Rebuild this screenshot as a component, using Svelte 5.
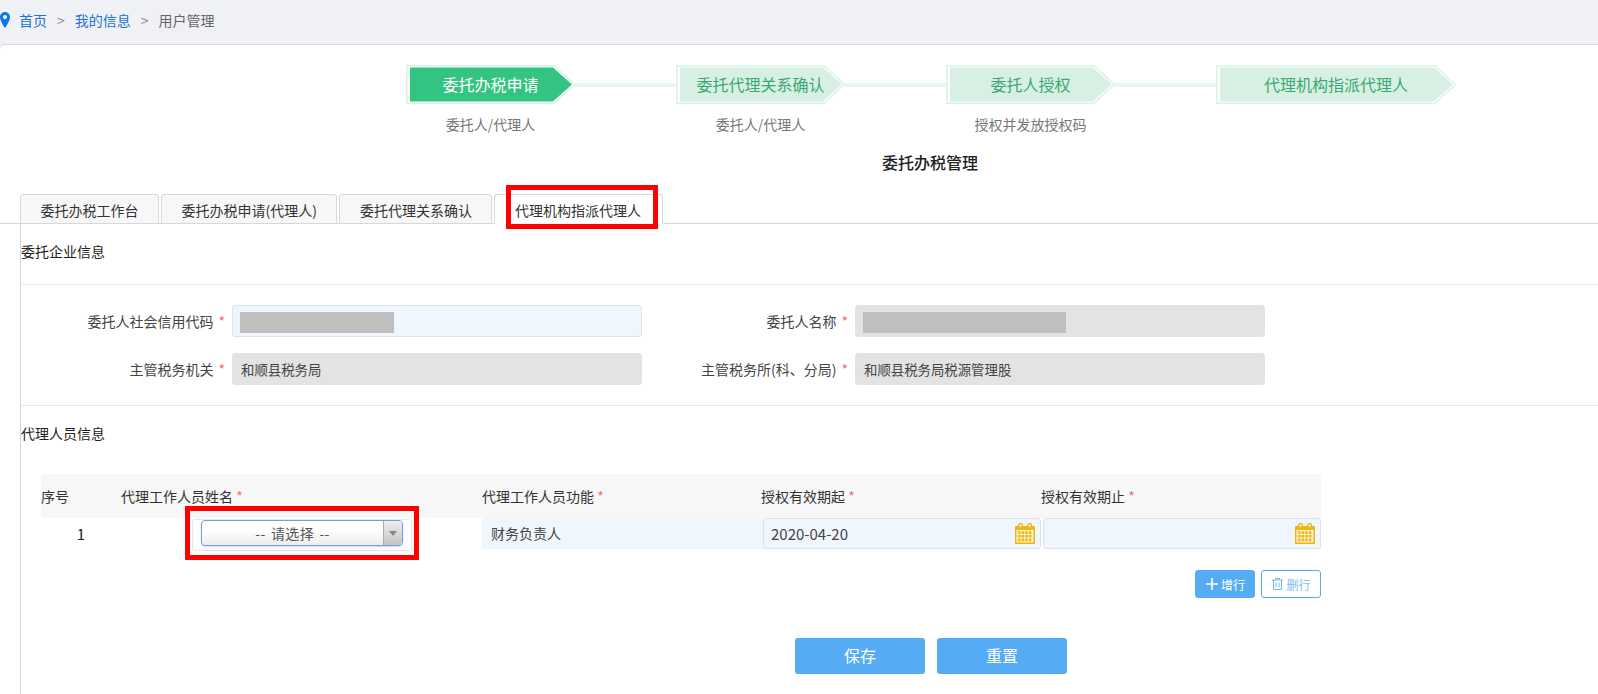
<script>
  const steps = [
    { name: '委托办税申请', sub: '委托人/代理人', w: 169, active: true },
    { name: '委托代理关系确认', sub: '委托人/代理人', w: 169, active: false },
    { name: '委托人授权', sub: '授权并发放授权码', w: 169, active: false },
    { name: '代理机构指派代理人', sub: '', w: 240, active: false }
  ];
  const tabs = ['委托办税工作台', '委托办税申请(代理人)', '委托代理关系确认', '代理机构指派代理人'];
  const cal = [0, 1, 2, 3];
  const calY = [0, 1, 2];
</script>

{#snippet calendar()}
  <svg class="cal" width="20" height="21" viewBox="0 0 20 21">
    <rect x="0" y="3" width="20" height="18" rx="1" fill="#f0b414" />
    <rect x="1.5" y="7" width="17" height="12.5" fill="#fdf3d0" />
    {#each calY as r}
      {#each cal as c}
        <rect x={3 + c * 3.6} y={8.2 + r * 3.7} width="2.6" height="2.7" fill="#f0b414" />
      {/each}
    {/each}
    <circle cx="5.5" cy="2.5" r="2" fill="#fbe7a8" stroke="#f0b414" stroke-width="1.2" />
    <circle cx="14.5" cy="2.5" r="2" fill="#fbe7a8" stroke="#f0b414" stroke-width="1.2" />
  </svg>
{/snippet}

<div class="page">
  <nav class="crumbs">
    <svg class="pin" width="11" height="16" viewBox="0 0 11 16">
      <path d="M5 0C2 0 0 2.300 0 5.200 0 9 5 16 5 16s5-7 5-10.800C10 2.300 8 0 5 0zm0 7.200a2.100 2.100 0 1 1 0-4.200 2.100 2.100 0 0 1 0 4.200z" fill="#0b78e3" />
    </svg>
    <a href="#home">首页</a>
    <span class="sep">&gt;</span>
    <a href="#info">我的信息</a>
    <span class="sep">&gt;</span>
    <span class="cur">用户管理</span>
  </nav>

  <main class="panel">
    <section class="steps">
      {#each steps as s, i}
        {#if i > 0}<div class="link"></div>{/if}
        <div class="col" style="width:{s.w}px">
          <div class="step" class:active={s.active}>
            <svg class="shape" width={s.w} height="39" viewBox="0 0 {s.w} 39">
              <polygon points="0.750,0.750 {s.w - 21},0.750 {s.w - 0.5},19.500 {s.w - 21},38.250 0.750,38.250" fill="#fff" stroke="#d9f2e9" stroke-width="1.500" />
              <polygon points="4,2.500 {s.w - 22},2.500 {s.w - 3},19.500 {s.w - 22},36.500 4,36.500" fill={s.active ? '#33c481' : '#d8f0e3'} />
            </svg>
            <span class="step-name">{s.name}</span>
          </div>
          <p class="sub">{s.sub}</p>
        </div>
      {/each}
    </section>

    <h1 class="title">委托办税管理</h1>

    <div class="tabs">
      {#each tabs as t, i}
        <div class="tab" class:on={i === 3}>
          {t}
          {#if i === 3}<span class="mark mark-tab"></span>{/if}
        </div>
      {/each}
    </div>

    <div class="content">
      <h2 class="head">委托企业信息</h2>
      <div class="form">
        <label class="lbl" for="f1">委托人社会信用代码<i>*</i></label>
        <div class="inp blue" id="f1"><span class="mask m1"></span></div>
        <label class="lbl" for="f2">委托人名称<i>*</i></label>
        <div class="inp gray" id="f2"><span class="mask m2"></span></div>
        <label class="lbl" for="f3">主管税务机关<i>*</i></label>
        <div class="inp gray" id="f3">和顺县税务局</div>
        <label class="lbl" for="f4">主管税务所(科、分局)<i>*</i></label>
        <div class="inp gray" id="f4">和顺县税务局税源管理股</div>
      </div>

      <h2 class="head second">代理人员信息</h2>
      <div class="table">
        <div class="thead">
          <div>序号</div>
          <div>代理工作人员姓名 <i>*</i></div>
          <div>代理工作人员功能 <i>*</i></div>
          <div>授权有效期起 <i>*</i></div>
          <div>授权有效期止 <i>*</i></div>
        </div>
        <div class="trow">
          <div class="no">1</div>
          <div class="namecell">
            <div class="selwrap">
              <div class="select">
                <span class="seltext">-- 请选择 --</span>
                <span class="selarrow"></span>
              </div>
              <span class="mark mark-sel"></span>
            </div>
          </div>
          <div class="fn">财务负责人</div>
          <div class="date">2020-04-20{@render calendar()}</div>
          <div class="date">{@render calendar()}</div>
        </div>
      </div>

      <div class="rowbtns">
        <button class="small fill">
          <svg width="14" height="14" viewBox="0 0 14 14"><path d="M7 1v12M1 7h12" stroke="#fff" stroke-width="1.600" /></svg>
          增行
        </button>
        <button class="small line">
          <svg width="13" height="14" viewBox="0 0 13 14" fill="none" stroke="#72b6f0" stroke-width="1"><path d="M1 3h11M4.500 3V1.500h4V3M2.500 3v9.500h8V3M5 5.500v5M8 5.500v5" /></svg>
          删行
        </button>
      </div>

      <div class="actions">
        <button class="big">保存</button>
        <button class="big">重置</button>
      </div>
    </div>
  </main>
</div>

<style>
  :global(body) {
    margin: 0;
    background: #fff;
  }
  .page {
    width: 1598px;
    height: 694px;
    overflow: hidden;
    background: #eff1f5;
    font-family: "Noto Sans CJK SC", "Open Sans", sans-serif;
    font-size: 14px;
    color: #333;
  }
  .crumbs {
    height: 44px;
    display: flex;
    align-items: center;
    font-size: 14px;
    line-height: 20px;
    padding-bottom: 4px;
    box-sizing: border-box;
  }
  .pin {
    margin-right: 8px;
    flex: none;
  }
  .crumbs a {
    color: #2272d8;
    text-decoration: none;
  }
  .sep {
    color: #888;
    margin: 0 10px;
    font-size: 14px;
  }
  .cur {
    color: #666;
  }
  .panel {
    height: 650px;
    background: #fff;
    border-top: 1px solid #d8d8de;
    border-top-left-radius: 5px;
    box-sizing: border-box;
    padding-top: 20px;
  }
  .steps {
    display: flex;
    align-items: flex-start;
    margin-left: 406px;
    height: 70px;
  }
  .link {
    width: 101px;
    height: 4px;
    margin-top: 18px;
    background: #e8f7f1;
    flex: none;
  }
  .col {
    flex: none;
  }
  .step {
    position: relative;
    height: 39px;
    display: flex;
    align-items: center;
    justify-content: center;
    font-size: 16px;
    color: #3aa874;
  }
  .step.active {
    color: #fff;
  }
  .shape {
    position: absolute;
    left: 0;
    top: 0;
  }
  .step-name {
    position: relative;
    padding-bottom: 2px;
  }
  .sub {
    margin: 10px 0 0;
    line-height: 20px;
    text-align: center;
    font-size: 14px;
    color: #777;
  }
  .title {
    margin: 17px 0 0 0;
    padding-left: 835px;
    width: 190px;
    text-align: center;
    font-size: 16px;
    line-height: 20px;
    font-weight: 500;
    color: #222;
    box-sizing: content-box;
  }
  .tabs {
    display: flex;
    gap: 2px;
    margin-top: 22px;
    padding-left: 20px;
    height: 30px;
    box-sizing: border-box;
    border-bottom: 1px solid #d8d8d8;
  }
  .tab {
    position: relative;
    height: 30px;
    box-sizing: border-box;
    padding: 0 19.500px;
    line-height: 30px;
    background: #f7f7f7;
    border: 1px solid #d8d8d8;
    border-radius: 3px 3px 0 0;
    color: #333;
    white-space: nowrap;
  }
  .tab.on {
    background: #fff;
    border-bottom-color: #fff;
    padding-right: 21px;
  }
  .mark {
    position: absolute;
    border: 5px solid #f00;
    box-sizing: border-box;
    pointer-events: none;
  }
  .mark-tab {
    left: 11px;
    top: -10px;
    width: 152px;
    height: 44px;
  }
  .mark-sel {
    left: -8px;
    top: -14px;
    width: 234px;
    height: 54px;
  }
  .content {
    margin-left: 20px;
    border-left: 1px solid #d5d5db;
    height: 470px;
  }
  .head {
    margin: 0;
    padding: 16px 0 0;
    font-size: 14px;
    line-height: 22px;
    font-weight: 400;
    color: #222;
    border-bottom: 1px solid #e8e8e8;
    height: 61px;
    box-sizing: border-box;
  }
  .head.second {
    border-bottom: 0;
    height: 68px;
  }
  .form {
    display: grid;
    grid-template-columns: 211px 410px 213px 410px;
    grid-auto-rows: 32px;
    row-gap: 16px;
    padding: 20px 0;
    border-bottom: 1px solid #e8e8e8;
  }
  .lbl {
    align-self: center;
    text-align: right;
    padding-right: 7px;
    color: #444;
    white-space: nowrap;
  }
  .lbl i,
  .thead i {
    font-style: normal;
    color: #f36a6a;
  }
  .lbl i {
    margin-left: 5px;
  }
  .inp {
    box-sizing: border-box;
    height: 32px;
    border-radius: 3px;
    border: 1px solid #e3e3e3;
    padding: 0 8px;
    font-size: 13.400px;
    line-height: 31px;
    color: #444;
  }
  .blue {
    background: #f0f6fd;
    border-color: #dde3ec;
  }
  .gray {
    background: #e3e3e3;
  }
  .mask {
    display: block;
    height: 21px;
    margin: 6px 0 0 -1px;
    background: #bfbfbf;
  }
  .m1 {
    width: 154px;
  }
  .m2 {
    width: 203px;
  }
  .table {
    margin-left: 20px;
    width: 1280px;
  }
  .thead {
    display: grid;
    grid-template-columns: 80px 361px 279px 280px 280px;
    height: 44px;
    line-height: 44px;
    background: #f7f7f7;
    color: #333;
  }
  .trow {
    display: grid;
    grid-template-columns: 80px 361px 281px 278px 280px;
    grid-template-rows: 31px;
    height: 31px;
  }
  .no {
    text-align: center;
    font-size: 15px;
    line-height: 31px;
    color: #222;
  }
  .namecell {
    padding-left: 71px;
    padding-top: 1px;
  }
  .selwrap {
    position: relative;
    width: 220px;
    height: 32px;
    box-sizing: border-box;
    border: 1px solid #e6e6e6;
    border-radius: 3px;
    padding: 0 8px;
  }
  .select {
    display: flex;
    box-sizing: border-box;
    height: 26px;
    width: 202px;
    border: 1px solid #6d9eeb;
    border-radius: 4px;
    overflow: hidden;
    background: linear-gradient(#fff 40%, #ececec);
    box-shadow: 0 1px 2px rgba(0, 0, 0, 0.15);
  }
  .seltext {
    flex: 1;
    text-align: center;
    line-height: 24px;
    font-size: 14px;
    word-spacing: 2px;
    letter-spacing: 0.3px;
    color: #555;
  }
  .selarrow {
    position: relative;
    width: 18px;
    background: linear-gradient(#eee, #c4c4c4);
    border-left: 1px solid #aaa;
  }
  .selarrow::after {
    content: "";
    position: absolute;
    left: 5px;
    top: 10px;
    border: 4px solid transparent;
    border-top: 5px solid #888;
    border-bottom: 0;
  }
  .fn {
    background: #f0f6fd;
    padding-left: 9px;
    font-size: 14px;
    line-height: 30px;
    color: #444;
  }
  .date {
    position: relative;
    box-sizing: border-box;
    height: 31px;
    background: #f0f6fd;
    border: 1px solid #dde0e6;
    border-radius: 3px;
    padding-left: 7px;
    font-size: 15px;
    line-height: 29px;
    color: #444;
  }
  .date + .date {
    margin-left: 2px;
  }
  .cal {
    position: absolute;
    right: 5px;
    top: 4px;
  }
  .rowbtns {
    display: flex;
    justify-content: flex-end;
    gap: 6px;
    width: 1300px;
    margin-top: 21px;
  }
  button {
    font-family: inherit;
    padding: 0;
    cursor: pointer;
  }
  .small {
    width: 60px;
    height: 28px;
    display: flex;
    align-items: center;
    justify-content: center;
    gap: 2px;
    font-size: 12px;
    border-radius: 3px;
    box-sizing: border-box;
    border: 1px solid #55acf4;
  }
  .small.fill {
    background: #55acf4;
    color: #fff;
  }
  .small.line {
    background: #fff;
    color: #80bdf2;
  }
  .actions {
    display: flex;
    gap: 12px;
    margin: 40px 0 0 774px;
  }
  .big {
    width: 130px;
    height: 36px;
    border: 0;
    border-radius: 3px;
    background: #55acf4;
    color: #fff;
    font-size: 16px;
    padding-bottom: 2px;
  }
</style>
